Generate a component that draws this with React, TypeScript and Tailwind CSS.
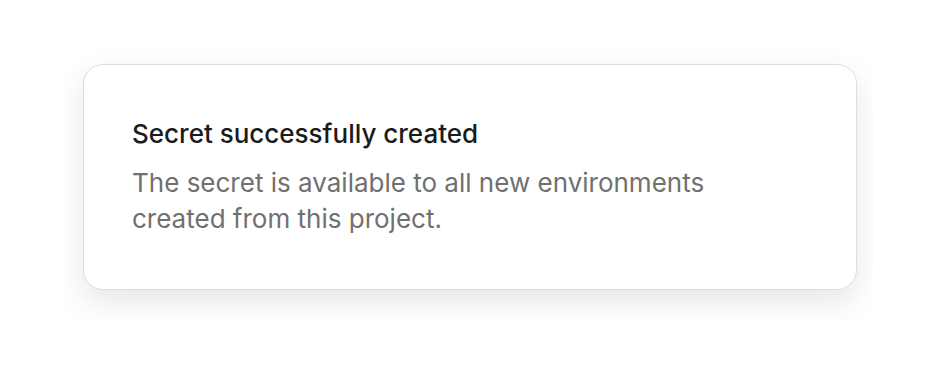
import React from "react";

export default function App() {
  return (
    <div className="w-[937px] h-[384px] bg-white overflow-hidden" style={{ fontFamily: "Inter, 'Noto Sans', sans-serif" }}>
      <div className="ml-[63px] mt-[44px] w-[810px] h-[276px] overflow-hidden pl-[20px] pt-[20px]">
        <div className="w-[774px] h-[226px] rounded-[20px] border border-[#dedede] bg-white shadow-[0_12px_32px_rgba(0,0,0,0.10)] pl-[48px] pt-[53px]">
          <div className="text-[26px] leading-[32px] font-medium text-[#1b1b1b]">
            Secret successfully created
          </div>
          <div className="mt-[15px] text-[26px] leading-[36px] text-[#707070] w-[620px]">
            The secret is available to all new environments created from this project.
          </div>
        </div>
      </div>
    </div>
  );
}
